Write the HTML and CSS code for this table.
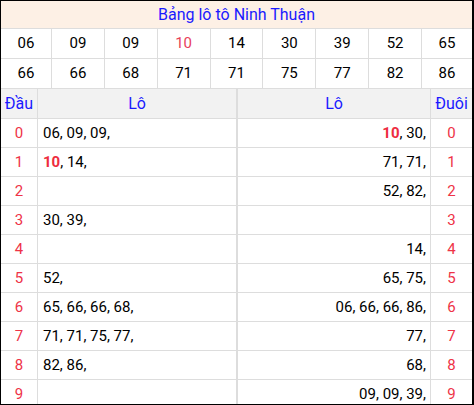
FILE: index.html
```html
<!DOCTYPE html>
<html lang="vi">
<head>
<meta charset="utf-8">
<title>Bảng lô tô Ninh Thuận</title>
<link rel="stylesheet" href="styles.css">
</head>
<body>
<div class="frame">
  <div class="title">Bảng lô tô Ninh Thuận</div>
  <div class="nums">
    <div class="n">06</div><div class="n">09</div><div class="n">09</div><div class="n hot">10</div><div class="n">14</div><div class="n">30</div><div class="n">39</div><div class="n">52</div><div class="n last">65</div>
    <div class="n">66</div><div class="n">66</div><div class="n">68</div><div class="n">71</div><div class="n">71</div><div class="n">75</div><div class="n">77</div><div class="n">82</div><div class="n last">86</div>
  </div>
  <div class="lo">
    <div class="h">Đầu</div><div class="h mid">Lô</div><div class="h">Lô</div><div class="h last">Đuôi</div>

    <div class="d">0</div><div class="l mid">06, 09, 09,</div><div class="r"><b>10</b>, 30,</div><div class="d last">0</div>
    <div class="d">1</div><div class="l mid"><b>10</b>, 14,</div><div class="r">71, 71,</div><div class="d last">1</div>
    <div class="d">2</div><div class="l mid"></div><div class="r">52, 82,</div><div class="d last">2</div>
    <div class="d">3</div><div class="l mid">30, 39,</div><div class="r"></div><div class="d last">3</div>
    <div class="d">4</div><div class="l mid"></div><div class="r">14,</div><div class="d last">4</div>
    <div class="d">5</div><div class="l mid">52,</div><div class="r">65, 75,</div><div class="d last">5</div>
    <div class="d">6</div><div class="l mid">65, 66, 66, 68,</div><div class="r">06, 66, 66, 86,</div><div class="d last">6</div>
    <div class="d">7</div><div class="l mid">71, 71, 75, 77,</div><div class="r">77,</div><div class="d last">7</div>
    <div class="d">8</div><div class="l mid">82, 86,</div><div class="r">68,</div><div class="d last">8</div>
    <div class="d">9</div><div class="l mid"></div><div class="r">09, 09, 39,</div><div class="d last">9</div>
  </div>
</div>
</body>
</html>
```

FILE: styles.css
```css
html, body {
  margin: 0;
  padding: 0;
  background: #fff;
}

body {
  font-family: Roboto, "Liberation Sans", sans-serif;
  color: #000;
}

.frame {
  width: 474px;
  height: 405px;
  box-sizing: border-box;
  border: 1px solid #000;
  border-right-width: 2px;
  overflow: hidden;
}

.title {
  height: 27px;
  line-height: 27px;
  text-align: center;
  font-size: 16px;
  color: #1a1aff;
  background: #fdf0e5;
  border-bottom: 1px solid #ddd;
}

.nums {
  display: grid;
  grid-template-columns: 51px repeat(7, 1fr) 50px;
  border-bottom: 1px solid #ddd;
}

.n {
  height: 29px;
  line-height: 29px;
  text-align: center;
  font-size: 15px;
  border-right: 1px solid #ddd;
  border-bottom: 1px solid #ddd;
}

.nums .n:nth-last-child(-n+9) {
  border-bottom: 0;
}

.n.last,
.lo .last {
  border-right: 0;
}

.n.hot {
  color: #e8415a;
}

.lo {
  display: grid;
  grid-template-columns: 37px 200px 193px 1fr;
}

.lo > div {
  box-sizing: border-box;
  height: 29px;
  line-height: 28px;
  font-size: 15px;
  border-right: 1px solid #ddd;
  border-bottom: 1px solid #ddd;
  white-space: nowrap;
}

.lo > .mid {
  border-right-width: 2px;
}

.lo > .h {
  height: 30px;
  line-height: 29px;
  text-align: center;
  font-size: 16px;
  color: #1a1aff;
  background: #f2f2f2;
}

.lo > .d {
  text-align: center;
  color: #ee3347;
}

.lo > .l {
  padding-left: 5px;
}

.lo > .r {
  text-align: right;
  padding-right: 4px;
}

.lo b {
  color: #ee2c3e;
  font-weight: 700;
}
```
